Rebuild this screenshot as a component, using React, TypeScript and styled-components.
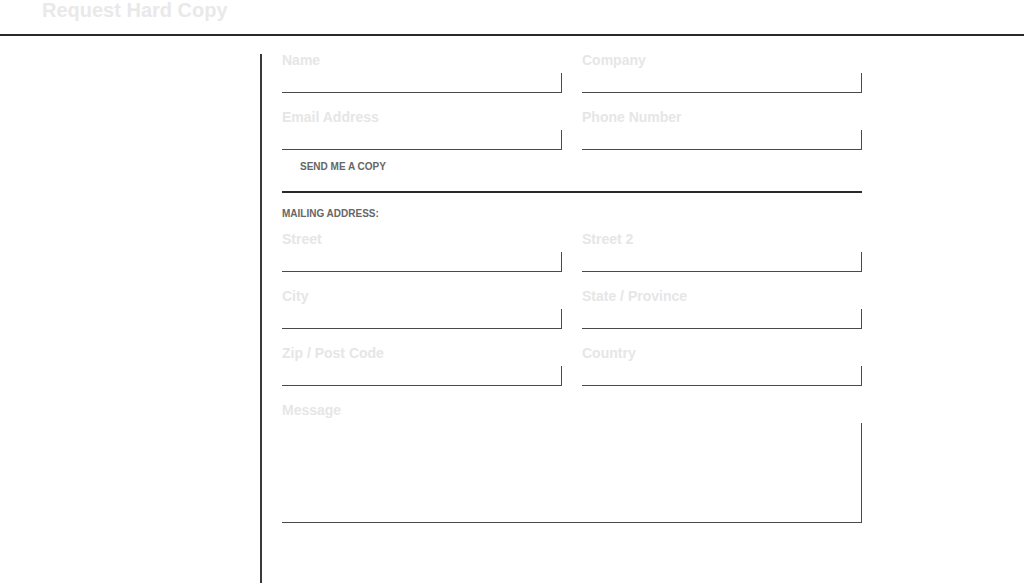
import React from "react";
import styled, { createGlobalStyle } from "styled-components";

const GlobalStyle = createGlobalStyle`
  html, body {
    margin: 0;
    padding: 0;
    background: #ffffff;
    font-family: "Liberation Sans", Arial, Helvetica, sans-serif;
  }
  * { box-sizing: border-box; }
`;

const Page = styled.div`
  width: 1024px;
  height: 583px;
  overflow: hidden;
  display: flex;
  flex-direction: column;
`;

const Header = styled.header`
  height: 36px;
  flex: none;
  border-bottom: 2px solid #2a2a2a;
  padding-left: 42px;
`;

const Title = styled.h1`
  margin: 0;
  font-size: 20px;
  line-height: 20px;
  font-weight: 700;
  color: #e9e9e9;
`;

const Body = styled.div`
  flex: 1;
  display: flex;
  padding-top: 18px;
  min-height: 0;
`;

const Sidebar = styled.div`
  width: 260px;
  flex: none;
`;

const FormPanel = styled.form`
  border-left: 2px solid #3a3a3a;
  padding-left: 20px;
  width: 602px;
  display: flex;
  flex-direction: column;
`;

const Grid = styled.div`
  display: grid;
  grid-template-columns: 280px 280px;
  column-gap: 20px;
  row-gap: 18px;
`;

const Field = styled.label<{ $full?: boolean }>`
  display: flex;
  flex-direction: column;
  grid-column: ${(p) => (p.$full ? "1 / -1" : "auto")};
`;

const LabelText = styled.span`
  font-size: 14px;
  line-height: 13px;
  font-weight: 700;
  color: #e6e6e6;
  margin-bottom: 6px;
`;

const Input = styled.input`
  display: block;
  height: 20px;
  width: 100%;
  border: none;
  border-bottom: 1px solid #4a4a4a;
  border-right: 1px solid #4a4a4a;
  background: transparent;
  outline: none;
  padding: 0 4px;
  font: inherit;
`;

const TextArea = styled.textarea`
  display: block;
  height: 100px;
  width: 100%;
  border: none;
  border-bottom: 1px solid #4a4a4a;
  border-right: 1px solid #4a4a4a;
  background: transparent;
  outline: none;
  resize: none;
  padding: 4px;
  font: inherit;
`;

const CopyRow = styled.div`
  margin-top: 11px;
  padding-left: 18px;
  font-size: 10px;
  line-height: 12px;
  font-weight: 700;
  color: #666;
  text-transform: uppercase;
`;

const Rule = styled.hr`
  margin: 18px 0 0 0;
  width: 580px;
  height: 2px;
  border: none;
  background: #2a2a2a;
`;

const SectionTitle = styled.div`
  margin-top: 15px;
  margin-bottom: 13px;
  font-size: 10px;
  line-height: 12px;
  font-weight: 700;
  color: #666;
  text-transform: uppercase;
`;

const TextField = ({ label }: { label: string }) => (
  <Field>
    <LabelText>{label}</LabelText>
    <Input type="text" />
  </Field>
);

export default function App() {
  return (
    <Page>
      <GlobalStyle />
      <Header>
        <Title>Request Hard Copy</Title>
      </Header>
      <Body>
        <Sidebar />
        <FormPanel>
          <Grid>
            <TextField label="Name" />
            <TextField label="Company" />
            <TextField label="Email Address" />
            <TextField label="Phone Number" />
          </Grid>
          <CopyRow>Send me a copy</CopyRow>
          <Rule />
          <SectionTitle>Mailing Address:</SectionTitle>
          <Grid>
            <TextField label="Street" />
            <TextField label="Street 2" />
            <TextField label="City" />
            <TextField label="State / Province" />
            <TextField label="Zip / Post Code" />
            <TextField label="Country" />
            <Field $full>
              <LabelText>Message</LabelText>
              <TextArea />
            </Field>
          </Grid>
        </FormPanel>
      </Body>
    </Page>
  );
}
